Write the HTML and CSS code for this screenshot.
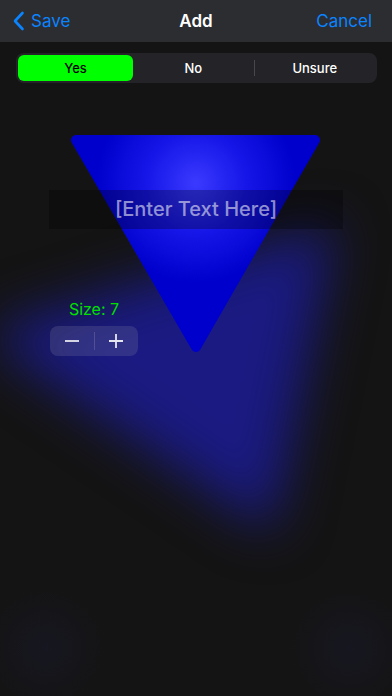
FILE: index.html
```html
<!DOCTYPE html>
<html lang="en">

<head>
    <meta charset="utf-8" />
    <meta name="viewport" content="width=device-width,initial-scale=1.0" />
    <title>Add</title>
    <link rel="stylesheet" href="styles.css">
</head>

<body>
    <div class="nav">
        <a class="nav-back">
            <svg width="13" height="20" viewBox="0 0 13 20">
                <path d="M10.5 2 L3 10 L10.5 18" fill="none" stroke="#0a84ff" stroke-width="2.6" stroke-linecap="round" stroke-linejoin="round" />
            </svg>
            <span>Save</span>
        </a>
        <div class="nav-title">Add</div>
        <a class="nav-cancel">Cancel</a>
    </div>

    <div class="segment">
        <div class="seg-item active">Yes</div>
        <div class="seg-item">No</div>
        <div class="seg-sep"></div>
        <div class="seg-item">Unsure</div>
    </div>

    <div class="canvas">
        <div class="glow">
            <div class="glow-shape"></div>
        </div>
        <div class="glow-corner left"></div>
        <div class="glow-corner right"></div>
        <svg class="shape" width="392" height="290" viewBox="0 0 392 290">
            <defs>
                <radialGradient id="shine" cx="196" cy="100" r="100" gradientUnits="userSpaceOnUse">
                    <stop offset="0" stop-color="#3a3aff" />
                    <stop offset="0.5" stop-color="#1616e8" />
                    <stop offset="1" stop-color="#0000cc" />
                </radialGradient>
            </defs>
            <polygon points="76,57 315,57 196,264" fill="url(#shine)" stroke="url(#shine)" stroke-width="10" stroke-linejoin="round" />
        </svg>
        <div class="text-field">[Enter Text Here]</div>
        <div class="size-box">
            <div class="size-label">Size: 7</div>
            <div class="stepper">
                <div class="step">
                    <svg width="16" height="16" viewBox="0 0 16 16"><path d="M1 8 H15" stroke="#e6e6f0" stroke-width="1.8" /></svg>
                </div>
                <div class="step-sep"></div>
                <div class="step">
                    <svg width="16" height="16" viewBox="0 0 16 16"><path d="M1 8 H15 M8 1 V15" stroke="#e6e6f0" stroke-width="1.8" /></svg>
                </div>
            </div>
        </div>
    </div>
</body>

</html>
```

FILE: styles.css
```css
html,
body {
    margin: 0;
    height: 100%;
}

body {
    width: 392px;
    height: 696px;
    background-color: #141414;
    font-family: Inter, "Liberation Sans", sans-serif;
    overflow: hidden;
}

.nav {
    height: 42px;
    background-color: #2c2d31;
    display: flex;
    align-items: center;
    justify-content: space-between;
    padding: 0 20px 0 12px;
    position: relative;
}

.nav-back {
    display: flex;
    align-items: center;
    gap: 6px;
    color: #0a84ff;
    font-size: 17px;
}

.nav-title {
    position: absolute;
    left: 0;
    right: 0;
    text-align: center;
    color: #fff;
    font-size: 17px;
    font-weight: 600;
    pointer-events: none;
}

.nav-cancel {
    color: #0a84ff;
    font-size: 17px;
}

.segment {
    margin: 11px 15px 0 16px;
    height: 30px;
    box-sizing: border-box;
    padding: 2px;
    background-color: #242428;
    border-radius: 8px;
    display: flex;
    align-items: center;
}

.seg-item {
    flex: 1;
    height: 26px;
    line-height: 26px;
    text-align: center;
    color: #fff;
    font-size: 13px;
    font-weight: 500;
    border-radius: 6px;
}

.seg-item.active {
    flex: 0 0 115px;
    background-color: #00ff00;
    color: #000;
}

.seg-sep {
    width: 1px;
    height: 16px;
    background-color: #48484c;
}

.canvas {
    position: relative;
    height: 613px;
    overflow: hidden;
}

.glow {
    position: absolute;
    left: 0;
    top: 0;
    width: 392px;
    height: 613px;
    filter: blur(26px);
}

.glow-shape {
    width: 100%;
    height: 100%;
    background-color: #1a1a82;
    clip-path: polygon(-20px 250px, 335px 140px, 272px 450px);
}

.glow-corner {
    position: absolute;
    top: 500px;
    width: 130px;
    height: 130px;
    border-radius: 50%;
    background: radial-gradient(circle, rgba(30, 30, 70, 0.25), rgba(20, 20, 20, 0) 70%);
}

.glow-corner.left {
    left: -20px;
}

.glow-corner.right {
    left: 285px;
}

.shape {
    position: absolute;
    left: 0;
    top: 0;
}

.text-field {
    position: absolute;
    left: 49px;
    top: 107px;
    width: 294px;
    height: 39px;
    line-height: 39px;
    background-color: rgba(0, 0, 0, 0.28);
    text-align: center;
    color: rgba(235, 235, 245, 0.6);
    font-size: 20px;
    font-weight: 500;
}

.size-box {
    position: absolute;
    left: 50px;
    top: 216px;
    width: 88px;
    display: flex;
    flex-direction: column;
    align-items: center;
    gap: 7px;
}

.size-label {
    color: #00e000;
    font-size: 16px;
}

.stepper {
    width: 88px;
    height: 30px;
    border-radius: 8px;
    background-color: rgba(118, 118, 160, 0.26);
    display: flex;
    align-items: center;
}

.step {
    flex: 1;
    display: flex;
    justify-content: center;
    align-items: center;
}

.step-sep {
    width: 1px;
    height: 18px;
    background-color: rgba(255, 255, 255, 0.15);
}
```
